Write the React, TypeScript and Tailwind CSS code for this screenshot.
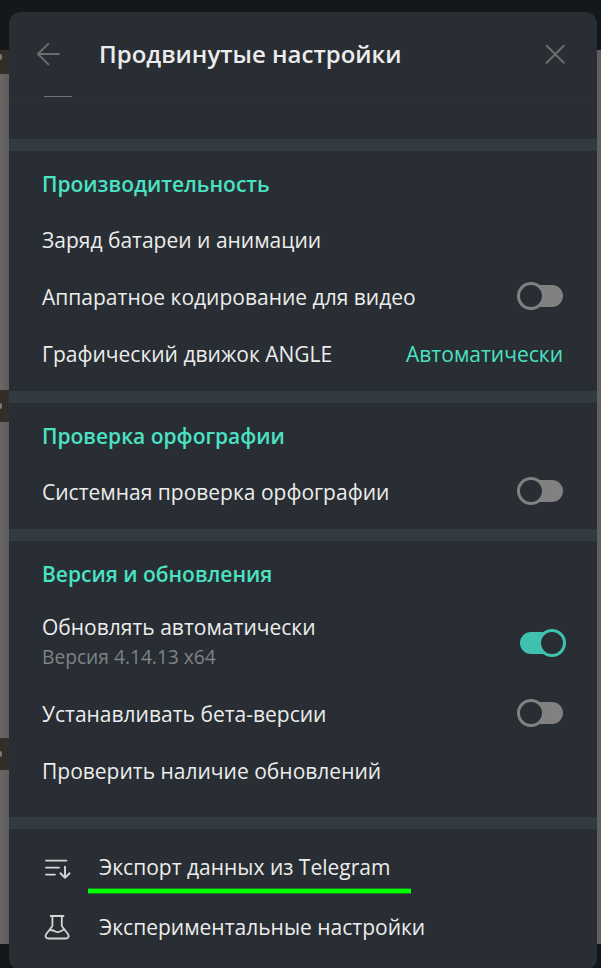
import type { ReactNode } from 'react';
import { clsx } from 'clsx';

function Toggle({ on = false }: { on?: boolean }) {
  return (
    <button
      role="switch"
      aria-checked={on}
      className={clsx('relative h-[22px] w-[43px] shrink-0 rounded-full', on ? 'bg-[#3fc1b0]' : 'bg-[#818181]')}
    >
      <span
        className={clsx(
          'absolute -top-[3px] size-7 rounded-full border-[3px] bg-[#282e33]',
          on ? '-right-[3px] border-[#3fc1b0]' : '-left-[3px] border-[#818181]',
        )}
      />
    </button>
  );
}

function Row({ label, children }: { label: string; children?: ReactNode }) {
  return (
    <div className="flex h-[57px] items-center justify-between">
      <span>{label}</span>
      {children}
    </div>
  );
}

function ToggleRow({ label }: { label: string }) {
  return (
    <Row label={label}>
      <div className="flex pb-[3px]">
        <Toggle />
      </div>
    </Row>
  );
}

function SectionTitle({ children }: { children: string }) {
  return <h2 className="h-[61px] pt-[19px] text-[21px] leading-[29px] font-semibold text-[#4be1c3]">{children}</h2>;
}

function Divider() {
  return <div className="h-3 shrink-0 bg-[#313b40]" />;
}

function BackIcon() {
  return (
    <svg width="24" height="24" viewBox="0 0 24 24" fill="none" stroke="#6b6c6c" strokeWidth="2" strokeLinecap="round" strokeLinejoin="round">
      <path d="M22.8 12H1.9M12.4 1.6 1.9 12l10.5 10.4" />
    </svg>
  );
}

function CloseIcon() {
  return (
    <svg width="20" height="20" viewBox="0 0 20 20" fill="none" stroke="#6b6c6c" strokeWidth="2" strokeLinecap="round">
      <path d="m1.7 1.7 17 17M18.7 1.7l-17 17" />
    </svg>
  );
}

function ExportIcon() {
  return (
    <svg width="28" height="24" viewBox="0 0 28 24" fill="none" stroke="#d4d5d5" strokeWidth="1.9" strokeLinecap="round" strokeLinejoin="round">
      <path d="M3 5.6h20.5M3 12.6h13M3 19.6h9M22 11.6v11.2M17.4 18.3l4.6 4.5 4.6-4.5" />
    </svg>
  );
}

function FlaskIcon() {
  return (
    <svg width="28" height="28" viewBox="0 0 28 28" fill="none" stroke="#d4d5d5" strokeWidth="1.8" strokeLinecap="round" strokeLinejoin="round">
      <path d="M7.7 3h12.8M9.4 3v9.4c0 .5-.2 1-.5 1.4L3.3 21c-1.6 2.2-.3 4.5 2.1 4.5h17.4c2.4 0 3.7-2.3 2.1-4.5l-5.6-7.2c-.3-.4-.5-.9-.5-1.4V3" />
      <path d="M7.2 17.4c2-.6 3.6.2 5.2 1.1 3 1.5 5.6.2 8.6-2.1" />
    </svg>
  );
}

// Dimmed window behind the dialog
function Backdrop() {
  const plate = 'shrink-0 w-[9px] bg-[#342c26] flex items-center';
  return (
    <div className="absolute inset-0 flex justify-between bg-[#14181b] pt-[50px] pb-6">
      <div className="flex w-[9px] flex-col bg-linear-to-r from-[#686765] to-[#5d5c5a]">
        <div className={clsx(plate, 'h-6')}>
          <span className="-mt-2.5 h-1.5 w-0.5 rounded-r-full bg-[#7c7b78]" />
        </div>
        <div className="h-[316px]" />
        <div className={clsx(plate, 'h-8')}>
          <span className="h-1.5 w-0.5 rounded-r-full bg-[#7c7b78]" />
        </div>
        <div className="h-[316px]" />
        <div className={clsx(plate, 'h-8')}>
          <span className="h-1.5 w-0.5 rounded-r-full bg-[#7c7b78]" />
        </div>
      </div>
      <div className="w-1 bg-[#605f5e]" />
    </div>
  );
}

export default function App() {
  return (
    <div className="relative h-[968px] w-[601px] overflow-hidden font-['Open_Sans',sans-serif] text-[21px] leading-[29px] text-[#ececec]">
      <Backdrop />
      <div className="relative mt-3 ml-[9px] flex h-[958px] w-[588px] flex-col overflow-hidden rounded-xl bg-[#282e33]">
        <header className="flex h-[85px] shrink-0 items-center border-b border-[#2a2f31] pr-8 pl-[27px]">
          <BackIcon />
          <h1 className="ml-[39px] flex-1 pb-0.5 text-[24px] font-semibold">Продвинутые настройки</h1>
          <CloseIcon />
        </header>
        {/* Bottom edge of the icon scrolled under the header */}
        <div className="-mt-px h-[43px] shrink-0 pl-[35px]">
          <div className="h-px w-7 bg-[#6f7172]" />
        </div>

        <Divider />
        <section className="h-60 shrink-0 pr-[34px] pl-[33px]">
          <SectionTitle>Производительность</SectionTitle>
          <Row label="Заряд батареи и анимации" />
          <ToggleRow label="Аппаратное кодирование для видео" />
          <Row label="Графический движок ANGLE">
            <span className="text-[#4be1c3]">Автоматически</span>
          </Row>
        </section>

        <Divider />
        <section className="h-[126px] shrink-0 pr-[34px] pl-[33px]">
          <SectionTitle>Проверка орфографии</SectionTitle>
          <ToggleRow label="Системная проверка орфографии" />
        </section>

        <Divider />
        <section className="h-[276px] shrink-0 pr-[34px] pl-[33px]">
          <SectionTitle>Версия и обновления</SectionTitle>
          <div className="flex h-[84px] items-center justify-between">
            <div className="pb-1">
              <div>Обновлять автоматически</div>
              <div className="text-[19.2px] text-[#7f8386]">Версия 4.14.13 x64</div>
            </div>
            <div className="flex pb-0.5">
              <Toggle on />
            </div>
          </div>
          <ToggleRow label="Устанавливать бета-версии" />
          <Row label="Проверить наличие обновлений" />
        </section>

        <Divider />
        <nav className="shrink-0 pt-2 pl-[34px]">
          <div className="flex h-[60px] items-center">
            <ExportIcon />
            <span className="relative ml-7">
              Экспорт данных из Telegram
              <span className="absolute top-[35px] -left-[11px] h-1.5 w-[323px] border-y border-[#187d20] bg-[#00ff00]" />
            </span>
          </div>
          <div className="flex h-[60px] items-center">
            <FlaskIcon />
            <span className="ml-7">Экспериментальные настройки</span>
          </div>
        </nav>
      </div>
    </div>
  );
}
